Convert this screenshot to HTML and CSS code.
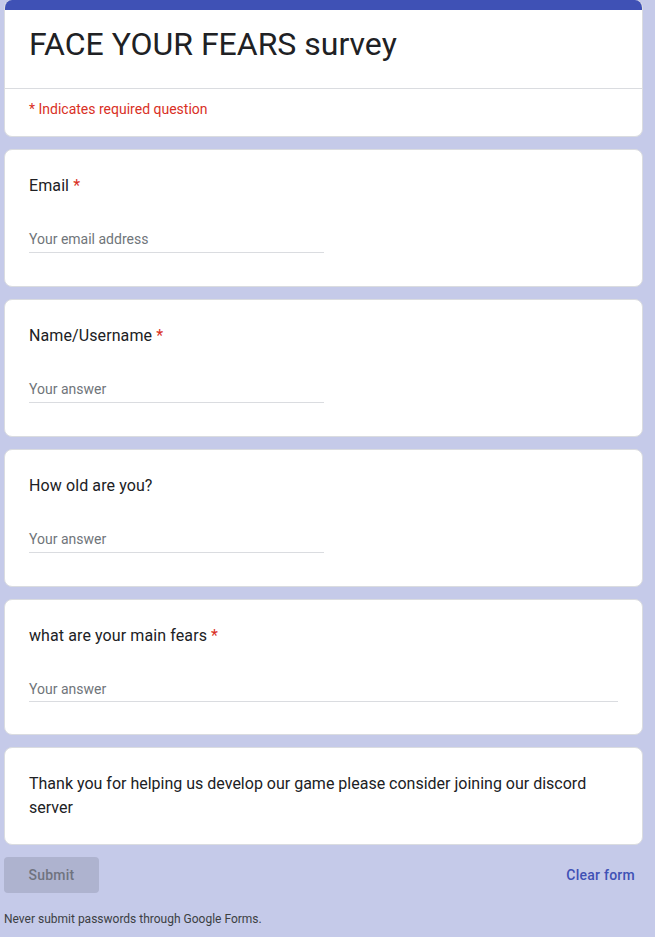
FILE: index.html
```html
<!DOCTYPE html>
<html lang="en">
<head>
<meta charset="utf-8">
<title>FACE YOUR FEARS survey</title>
<link rel="stylesheet" href="styles.css">
</head>
<body>
<main class="form">
  <section class="card header-card">
    <div class="bar"></div>
    <div class="title-area">
      <h1 class="title">FACE YOUR FEARS survey</h1>
    </div>
    <div class="required-note">* Indicates required question</div>
  </section>

  <section class="card question">
    <div class="q-title">Email <span class="req">*</span></div>
    <div class="input short"><span class="placeholder">Your email address</span></div>
  </section>

  <section class="card question">
    <div class="q-title">Name/Username <span class="req">*</span></div>
    <div class="input short"><span class="placeholder">Your answer</span></div>
  </section>

  <section class="card question">
    <div class="q-title">How old are you?</div>
    <div class="input short"><span class="placeholder">Your answer</span></div>
  </section>

  <section class="card question">
    <div class="q-title">what are your main fears <span class="req">*</span></div>
    <div class="input long"><span class="placeholder">Your answer</span></div>
  </section>

  <section class="card text-card">
    <p class="note-text">Thank you for helping us develop our game please consider joining our discord server</p>
  </section>

  <div class="actions">
    <button class="submit" type="button">Submit</button>
    <a class="clear" href="#">Clear form</a>
  </div>

  <p class="footer">Never submit passwords through Google Forms.</p>
</main>
</body>
</html>
```

FILE: styles.css
```css
html, body {
  margin: 0;
  padding: 0;
  background: #c5cae9;
}
body {
  font-family: Roboto, "Liberation Sans", Arial, sans-serif;
  color: #202124;
}
.form {
  width: 639px;
  margin-left: 4px;
  display: flex;
  flex-direction: column;
  gap: 12px;
}
.card {
  background: #fff;
  border: 1px solid #dadce0;
  border-radius: 8px;
  box-sizing: border-box;
}
.header-card {
  border-top: none;
  overflow: hidden;
}
.bar {
  height: 10px;
  background: #3f51b5;
  margin: 0 -1px;
}
.title-area {
  padding: 14px 24px 24px 24px;
  border-bottom: 1px solid #dadce0;
}
.title {
  margin: 0;
  font-size: 32px;
  line-height: 40px;
  font-weight: 400;
  color: #202124;
}
.required-note {
  padding: 10px 24px 17px 24px;
  font-size: 14px;
  line-height: 20px;
  color: #d93025;
}
.question {
  padding: 24px 24px 24px 24px;
}
.q-title {
  font-size: 16px;
  line-height: 24px;
  letter-spacing: 0.1px;
}
.req {
  color: #d93025;
}
.input {
  margin-top: 31px;
  margin-bottom: 9px;
  padding-bottom: 3px;
  border-bottom: 1px solid #dadce0;
  font-size: 14px;
  line-height: 20px;
}
.input.short {
  width: 295px;
}
.input.long {
  width: 100%;
  padding-bottom: 2px;
  margin-bottom: 8px;
}
.placeholder {
  color: #70757a;
}
.text-card {
  padding: 24px;
}
.note-text {
  margin: 0;
  font-size: 16px;
  line-height: 24px;
}
.actions {
  display: flex;
  justify-content: space-between;
  align-items: center;
  padding-right: 8px;
}
.submit {
  width: 95px;
  height: 36px;
  border: none;
  border-radius: 4px;
  background: #aeb3cf;
  color: #70737f;
  font-family: Roboto, "Liberation Sans", Arial, sans-serif;
  font-size: 14px;
  font-weight: 500;
  letter-spacing: 0.25px;
  padding: 0;
}
.clear {
  color: #3f51b5;
  text-decoration: none;
  font-size: 14px;
  font-weight: 500;
  letter-spacing: 0.25px;
}
.footer {
  margin: 6px 0 0 0;
  font-size: 12px;
  line-height: 16px;
  color: #3c4043;
}
```
